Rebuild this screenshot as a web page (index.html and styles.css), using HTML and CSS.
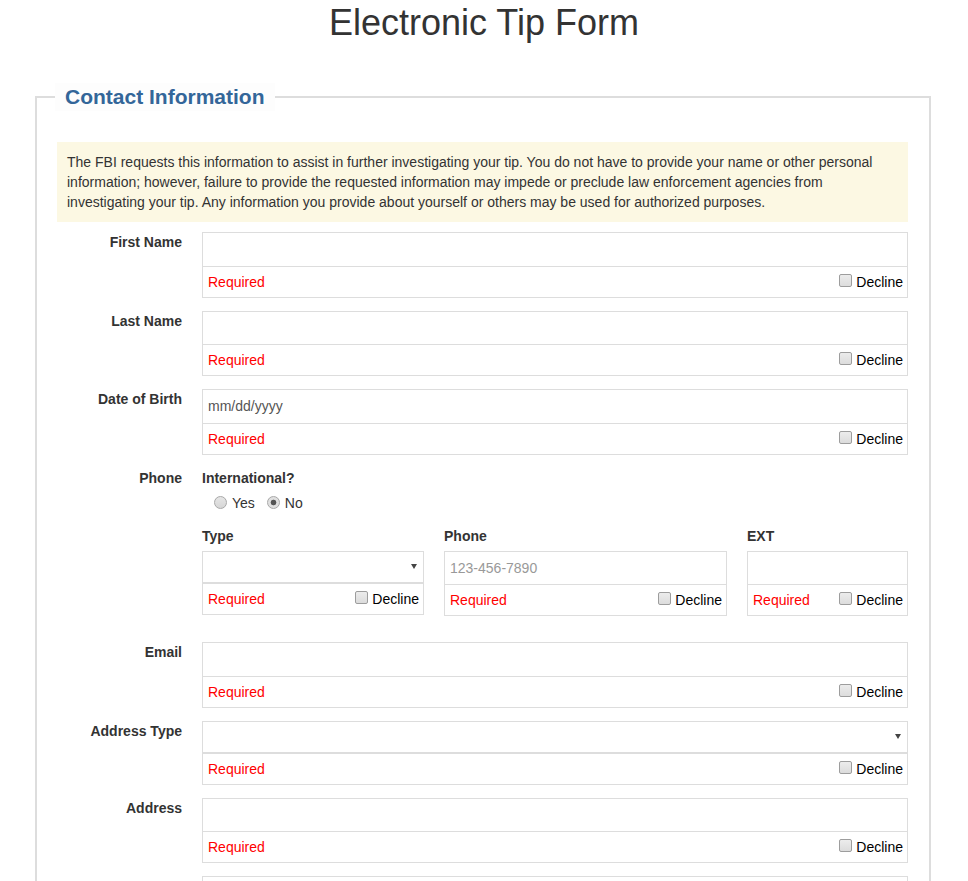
FILE: index.html
```html
<!DOCTYPE html>
<html lang="en">
<head>
<meta charset="utf-8">
<title>Electronic Tip Form</title>
<link rel="stylesheet" href="styles.css">
</head>
<body>
<h1 class="title">Electronic Tip Form</h1>
<fieldset class="panel">
  <legend class="panel-legend">Contact Information</legend>
  <div class="notice">The FBI requests this information to assist in further investigating your tip. You do not have to provide your name or other personal information; however, failure to provide the requested information may impede or preclude law enforcement agencies from investigating your tip. Any information you provide about yourself or others may be used for authorized purposes.</div>

  <div class="row">
    <div class="row-label">First Name</div>
    <div class="field">
      <input class="text-input" type="text">
      <div class="status"><span class="req">Required</span><label class="decline"><input type="checkbox" class="check">Decline</label></div>
    </div>
  </div>

  <div class="row">
    <div class="row-label">Last Name</div>
    <div class="field">
      <input class="text-input" type="text">
      <div class="status"><span class="req">Required</span><label class="decline"><input type="checkbox" class="check">Decline</label></div>
    </div>
  </div>

  <div class="row">
    <div class="row-label">Date of Birth</div>
    <div class="field">
      <input class="text-input dob" type="text" placeholder="mm/dd/yyyy">
      <div class="status"><span class="req">Required</span><label class="decline"><input type="checkbox" class="check">Decline</label></div>
    </div>
  </div>

  <div class="row row-phone">
    <div class="row-label">Phone</div>
    <div class="field">
      <div class="sub-label">International?</div>
      <div class="radio-group">
        <label class="radio-opt"><input type="radio" name="intl" class="radio">Yes</label>
        <label class="radio-opt"><input type="radio" name="intl" class="radio" checked>No</label>
      </div>
      <div class="phone-grid">
        <div class="phone-col">
          <div class="sub-label col-label">Type</div>
          <div class="select-wrap"><select class="select-input"><option></option></select></div>
          <div class="status status-sel"><span class="req">Required</span><label class="decline"><input type="checkbox" class="check">Decline</label></div>
        </div>
        <div class="phone-col">
          <div class="sub-label col-label">Phone</div>
          <input class="text-input phone" type="text" placeholder="123-456-7890">
          <div class="status"><span class="req">Required</span><label class="decline"><input type="checkbox" class="check">Decline</label></div>
        </div>
        <div class="phone-col">
          <div class="sub-label col-label">EXT</div>
          <input class="text-input" type="text">
          <div class="status"><span class="req">Required</span><label class="decline"><input type="checkbox" class="check">Decline</label></div>
        </div>
      </div>
    </div>
  </div>

  <div class="row">
    <div class="row-label">Email</div>
    <div class="field">
      <input class="text-input" type="text">
      <div class="status"><span class="req">Required</span><label class="decline"><input type="checkbox" class="check">Decline</label></div>
    </div>
  </div>

  <div class="row">
    <div class="row-label">Address Type</div>
    <div class="field">
      <div class="select-wrap"><select class="select-input"><option></option></select></div>
      <div class="status status-sel"><span class="req">Required</span><label class="decline"><input type="checkbox" class="check">Decline</label></div>
    </div>
  </div>

  <div class="row">
    <div class="row-label">Address</div>
    <div class="field">
      <input class="text-input" type="text">
      <div class="status"><span class="req">Required</span><label class="decline"><input type="checkbox" class="check">Decline</label></div>
    </div>
  </div>

  <div class="row">
    <div class="row-label"></div>
    <div class="field">
      <input class="text-input" type="text">
    </div>
  </div>
</fieldset>
</body>
</html>
```

FILE: styles.css
```css
html, body {
  margin: 0;
  padding: 0;
  background: #fff;
}

body {
  font-family: "Liberation Sans", Arial, sans-serif;
  font-size: 14px;
  line-height: 20px;
  color: #333;
}

.title {
  margin: 0;
  font-size: 36px;
  line-height: 46px;
  font-weight: normal;
  text-align: center;
  color: #333;
}

.panel {
  margin: 37px 37px 0 35px;
  padding: 31px 21px 20px 20px;
  border: 2px solid #ddd;
  min-width: 0;
}

.panel-legend {
  margin-left: -2px;
  padding: 0 10px;
  font-size: 21px;
  line-height: 28px;
  font-weight: bold;
  color: #336699;
  background: #fdfdfd;
}

.notice {
  background: #fcf8e3;
  padding: 10px;
  margin-bottom: 10px;
  color: #333;
}

.row {
  display: grid;
  grid-template-columns: 125px 706px;
  column-gap: 20px;
  margin-bottom: 13px;
}

.row-phone {
  margin-bottom: 26px;
}

.row-label {
  text-align: right;
  font-weight: bold;
  color: #333;
}

.field {
  min-width: 0;
}

.text-input {
  display: block;
  box-sizing: border-box;
  width: 100%;
  height: 34.5px;
  margin: 0;
  padding: 0 5px;
  border: 1px solid #ddd;
  font-family: "Liberation Sans", Arial, sans-serif;
  font-size: 14px;
  color: #333;
  background: #fff;
  outline: none;
}

.text-input::placeholder {
  color: #999;
}

.dob::placeholder {
  color: #555;
}

.select-wrap {
  position: relative;
}

.select-wrap::after {
  content: "";
  position: absolute;
  right: 7px;
  top: 13px;
  width: 0;
  height: 0;
  border-left: 3px solid transparent;
  border-right: 3px solid transparent;
  border-top: 5px solid #444;
  pointer-events: none;
}

.select-input {
  display: block;
  box-sizing: border-box;
  width: 100%;
  height: 32px;
  margin: 0;
  padding: 0 5px;
  border: 1px solid #ddd;
  border-radius: 0;
  background: #fff;
  -webkit-appearance: none;
  appearance: none;
  font-family: "Liberation Sans", Arial, sans-serif;
  font-size: 14px;
  outline: none;
}

.status {
  display: flex;
  justify-content: space-between;
  align-items: flex-start;
  box-sizing: border-box;
  height: 32px;
  margin-top: -1px;
  padding: 5px 4px 5px 5px;
  border: 1px solid #ddd;
}

.status-sel {
  margin-top: 0;
}

.req {
  color: #f00;
}

.decline {
  display: flex;
  align-items: flex-start;
  color: #000;
}

.check {
  -webkit-appearance: none;
  appearance: none;
  box-sizing: border-box;
  width: 13px;
  height: 13px;
  margin: 2px 4px 0 0;
  border: 1px solid #9d9d9d;
  border-radius: 2px;
  background: linear-gradient(#ececec, #dcdcdc);
}

.sub-label {
  font-weight: bold;
  color: #333;
}

.radio-group {
  display: flex;
  align-items: flex-start;
  margin-top: 5px;
  padding-left: 12px;
  color: #333;
}

.radio-opt {
  display: flex;
  align-items: flex-start;
  margin-right: 12px;
}

.radio {
  -webkit-appearance: none;
  appearance: none;
  box-sizing: border-box;
  width: 13px;
  height: 13px;
  margin: 3px 5px 0 0;
  border: 1px solid #a8a8a8;
  border-radius: 50%;
  background: linear-gradient(#e6e6e6, #d6d6d6);
}

.radio:checked {
  background: radial-gradient(circle, #555 0, #555 2.5px, #e0e0e0 3.2px);
}

.phone-grid {
  display: grid;
  grid-template-columns: 222px 283px 161px;
  column-gap: 20px;
  margin-top: 13px;
}

.col-label {
  margin-bottom: 5px;
}
```
